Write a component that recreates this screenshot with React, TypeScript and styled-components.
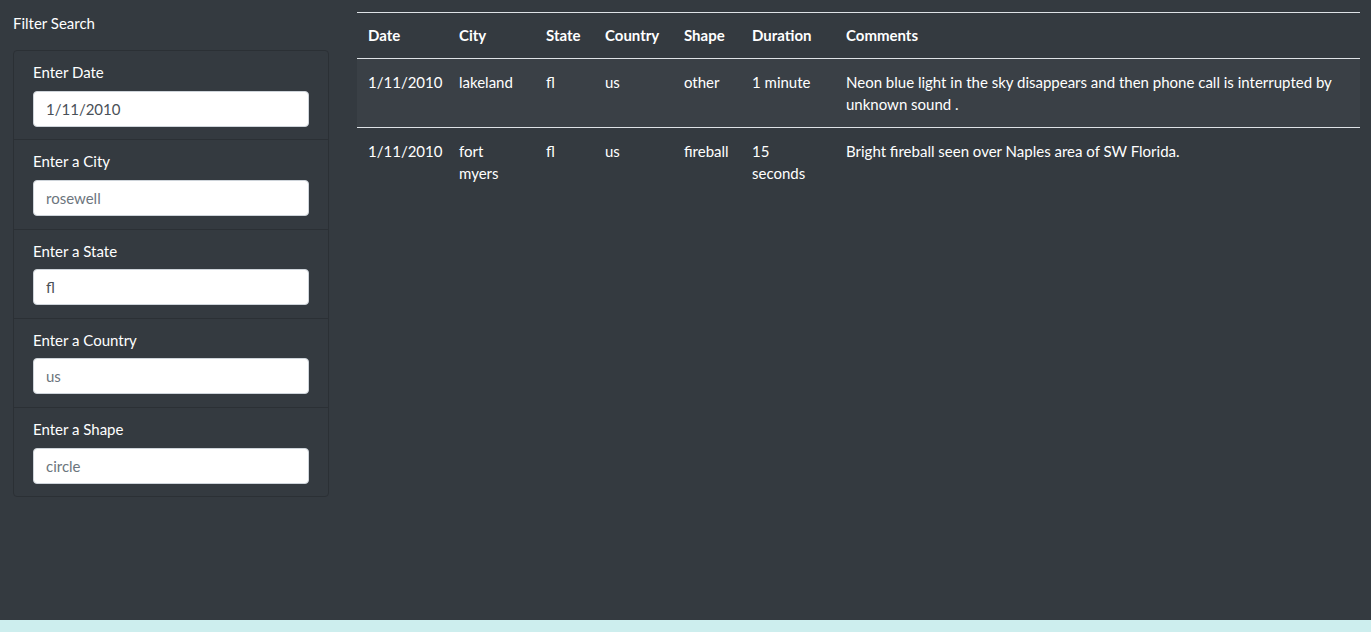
import React from "react";
import styled, { createGlobalStyle } from "styled-components";

const Global = createGlobalStyle`
  html, body { margin: 0; padding: 0; }
  body {
    background: #cdeeee;
    font-family: Lato, "Noto Sans", "Liberation Sans", sans-serif;
    font-size: 15px;
    line-height: 1.5;
    color: #fff;
  }
  * { box-sizing: border-box; }
`;

const Page = styled.div`
  background: #343a40;
  height: 620px;
  display: flex;
  align-items: flex-start;
  padding: 12px 11px 0 13px;
  gap: 28px;
`;

const Sidebar = styled.aside`
  width: 316px;
  flex: none;
`;

const SideTitle = styled.div`
  font-size: 15px;
  line-height: 22px;
  margin-bottom: 16px;
`;

const FilterList = styled.ul`
  list-style: none;
  margin: 0;
  padding: 0;
  border: 1px solid #2b3035;
  border-radius: 4px;
`;

const FilterItem = styled.li`
  padding: 10px 19px 12.75px 19px;
  border-top: 1px solid #2b3035;
  &:first-child { border-top: none; }
`;

const Label = styled.label`
  display: block;
  font-size: 15px;
  line-height: 22.5px;
  margin-bottom: 7px;
`;

const Input = styled.input`
  display: block;
  width: 100%;
  height: 36px;
  padding: 6px 12px;
  font-family: inherit;
  font-size: 15px;
  line-height: 22.5px;
  color: #495057;
  background: #fff;
  border: 1px solid #ced4da;
  border-radius: 4px;
  outline: none;
  &::placeholder { color: #6c757d; opacity: 1; }
`;

const Main = styled.main`
  flex: 1;
  min-width: 0;
`;

const Table = styled.table`
  width: 100%;
  border-collapse: collapse;
  table-layout: fixed;
  color: #fff;
  font-size: 15px;
  line-height: 22.5px;
`;

const Th = styled.th`
  text-align: left;
  font-weight: 700;
  padding: 11px 11px 11px;
  border-top: 1px solid #dee2e6;
  border-bottom: 1px solid #dee2e6;
  vertical-align: bottom;
`;

const Tr = styled.tr<{ $striped?: boolean }>`
  background: ${(p) => (p.$striped ? "rgba(255,255,255,0.03)" : "transparent")};
`;

const Td = styled.td`
  padding: 12px 11px 11px;
  vertical-align: top;
  border-top: 1px solid #dee2e6;
`;

const filters = [
  { label: "Enter Date", value: "1/11/2010", placeholder: "" },
  { label: "Enter a City", value: "", placeholder: "rosewell" },
  { label: "Enter a State", value: "fl", placeholder: "" },
  { label: "Enter a Country", value: "", placeholder: "us" },
  { label: "Enter a Shape", value: "", placeholder: "circle" },
];

const rows = [
  {
    date: "1/11/2010",
    city: "lakeland",
    state: "fl",
    country: "us",
    shape: "other",
    duration: "1 minute",
    comments:
      "Neon blue light in the sky disappears and then phone call is interrupted by unknown sound .",
  },
  {
    date: "1/11/2010",
    city: "fort myers",
    state: "fl",
    country: "us",
    shape: "fireball",
    duration: "15 seconds",
    comments: "Bright fireball seen over Naples area of SW Florida.",
  },
];

const cols = [91, 87, 59, 79, 68, 94];

export default function App() {
  return (
    <>
      <Global />
      <Page>
        <Sidebar>
          <SideTitle>Filter Search</SideTitle>
          <FilterList>
            {filters.map((f) => (
              <FilterItem key={f.label}>
                <Label>{f.label}</Label>
                <Input defaultValue={f.value} placeholder={f.placeholder} />
              </FilterItem>
            ))}
          </FilterList>
        </Sidebar>
        <Main>
          <Table>
            <colgroup>
              {cols.map((w, i) => (
                <col key={i} style={{ width: w }} />
              ))}
              <col />
            </colgroup>
            <thead>
              <tr>
                <Th>Date</Th>
                <Th>City</Th>
                <Th>State</Th>
                <Th>Country</Th>
                <Th>Shape</Th>
                <Th>Duration</Th>
                <Th>Comments</Th>
              </tr>
            </thead>
            <tbody>
              {rows.map((r, i) => (
                <Tr key={i} $striped={i % 2 === 0}>
                  <Td>{r.date}</Td>
                  <Td>{r.city}</Td>
                  <Td>{r.state}</Td>
                  <Td>{r.country}</Td>
                  <Td>{r.shape}</Td>
                  <Td>{r.duration}</Td>
                  <Td>{r.comments}</Td>
                </Tr>
              ))}
            </tbody>
          </Table>
        </Main>
      </Page>
    </>
  );
}
